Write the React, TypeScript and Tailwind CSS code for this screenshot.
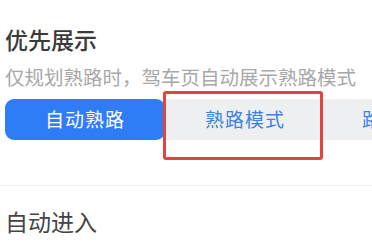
export default function App() {
  return (
    <div
      className="w-[372px] h-[248px] overflow-hidden bg-white"
      style={{ fontFamily: '"Noto Sans CJK SC", "Noto Sans", sans-serif' }}
    >
      <div className="pl-[5px] pt-[25px]">
        <div className="text-[23px] leading-[29px] font-medium text-[#3a3a3a]">优先展示</div>
        <div className="mt-[11px] text-[19.5px] leading-[24px] text-[#a8a8a8] whitespace-nowrap">
          仅规划熟路时，驾车页自动展示熟路模式
        </div>
        <div className="relative mt-[10px]">
          <div className="flex h-[41px] w-[600px] rounded-[9px] bg-[#eeeff1] text-[19px]">
            <div className="flex w-[160px] items-center justify-center rounded-[9px] bg-[#2f7df6] text-white tracking-[1px]">
              自动熟路
            </div>
            <div className="flex w-[160px] items-center justify-center text-[#3d82e0] tracking-[1px]">
              熟路模式
            </div>
            <div className="ml-[4px] flex w-[160px] items-center justify-start pl-[33px] text-[#3d82e0] tracking-[1px]">
              路线优先
            </div>
          </div>
          <div className="absolute left-[158px] top-[-8px] h-[69px] w-[160px] rounded-[3px] border-[3px] border-[#e0453e]" />
        </div>
      </div>
      <div className="mt-[45px] h-px w-full bg-[#f2f2f2]" />
      <div className="pl-[5px] pt-[21px] text-[23px] leading-[29px] text-[#444444]">自动进入</div>
    </div>
  );
}
